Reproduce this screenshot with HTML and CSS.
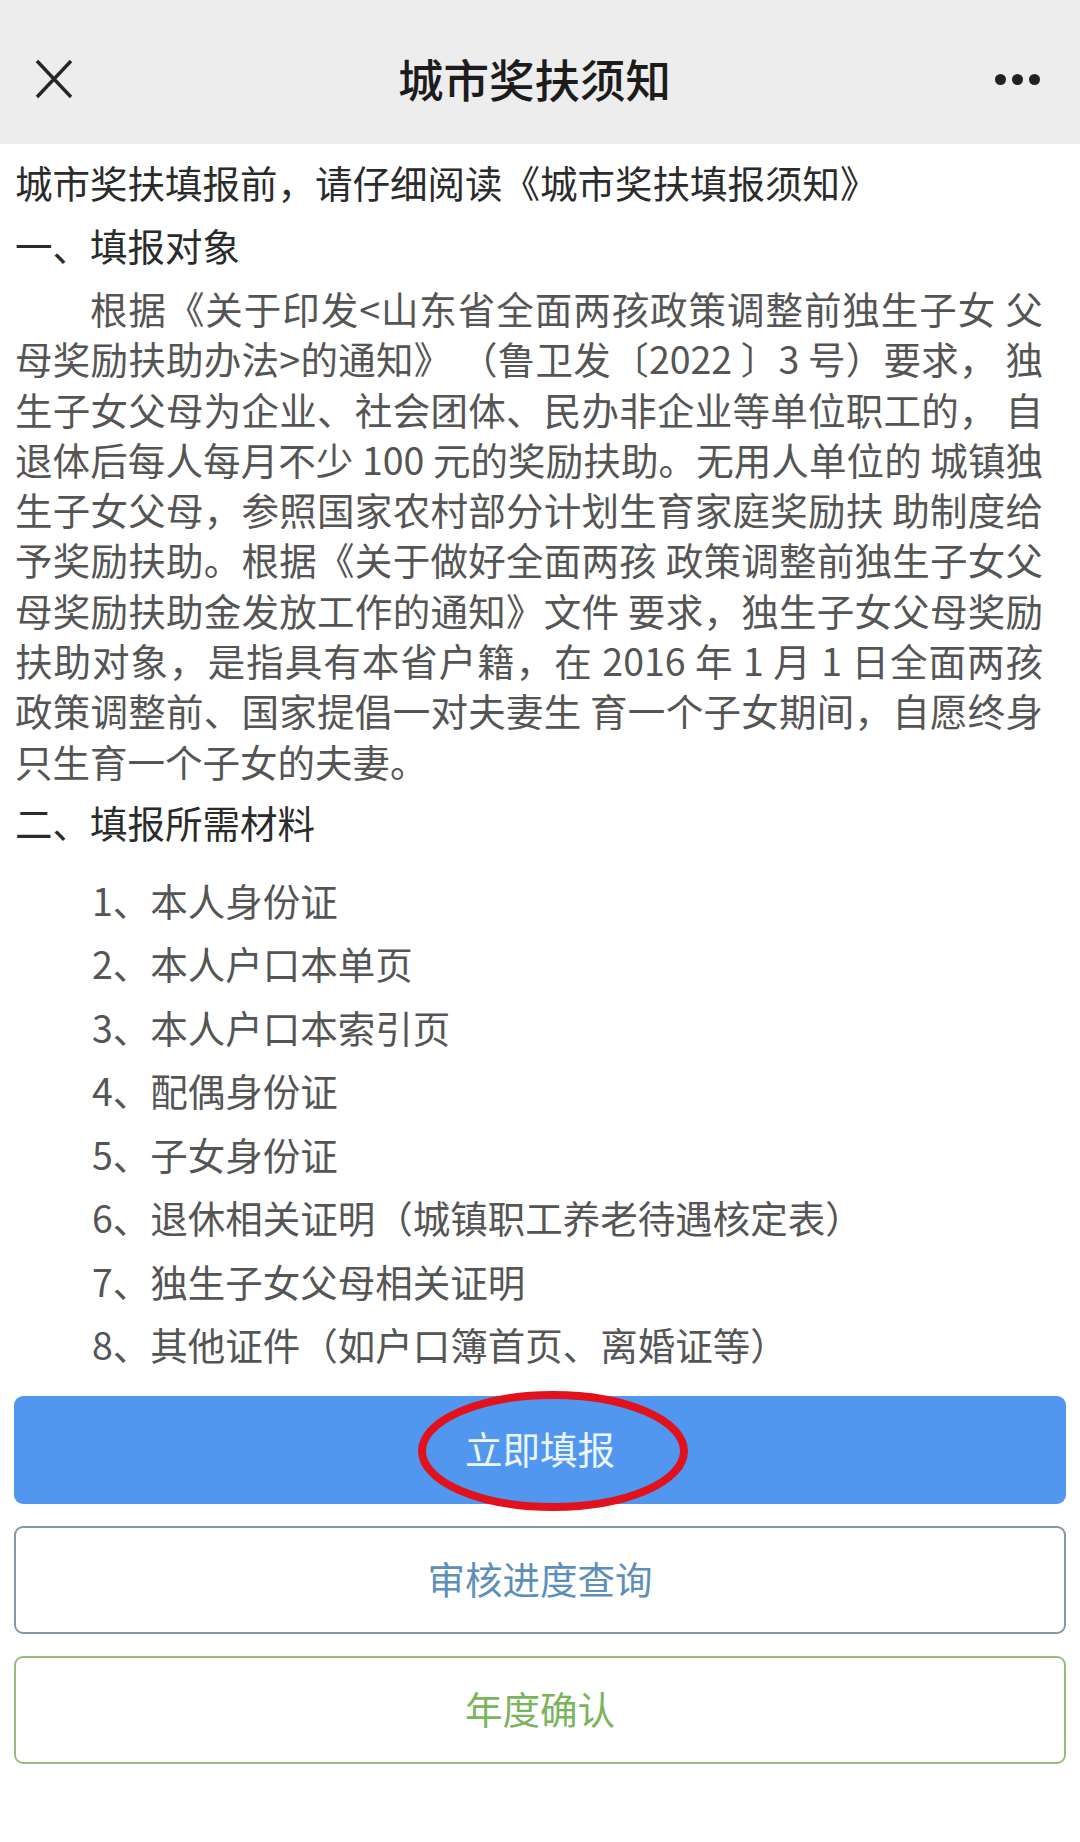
FILE: index.html
```html
<!DOCTYPE html>
<html lang="zh-CN">
<head>
<meta charset="utf-8">
<title>城市奖扶须知</title>
<link rel="stylesheet" href="styles.css">
</head>
<body>
<header class="topbar">
  <button class="icon-btn close" aria-label="关闭">
    <svg width="40" height="40" viewBox="0 0 40 40"><path d="M3 2 L37 38 M37 2 L3 38" stroke="#262626" stroke-width="3.4" fill="none" stroke-linecap="butt"/></svg>
  </button>
  <h1 class="title">城市奖扶须知</h1>
  <button class="icon-btn more" aria-label="更多">
    <span class="dot"></span><span class="dot"></span><span class="dot"></span>
  </button>
</header>
<main class="content">
  <p class="intro">城市奖扶填报前，请仔细阅读《城市奖扶填报须知》</p>
  <h2 class="section">一、填报对象</h2>
  <div class="para">
    <span class="ln first">根据《关于印发&lt;山东省全面两孩政策调整前独生子女 父</span>
    <span class="ln">母奖励扶助办法&gt;的通知》 （鲁卫发〔2022 〕3 号）要求， 独</span>
    <span class="ln">生子女父母为企业、社会团体、民办非企业等单位职工的， 自</span>
    <span class="ln">退体后每人每月不少 100 元的奖励扶助。无用人单位的 城镇独</span>
    <span class="ln">生子女父母，参照国家农村部分计划生育家庭奖励扶 助制度给</span>
    <span class="ln">予奖励扶助。根据《关于做好全面两孩 政策调整前独生子女父</span>
    <span class="ln">母奖励扶助金发放工作的通知》文件 要求，独生子女父母奖励</span>
    <span class="ln">扶助对象，是指具有本省户籍，在 2016 年 1 月 1 日全面两孩</span>
    <span class="ln">政策调整前、国家提倡一对夫妻生 育一个子女期间，自愿终身</span>
    <span class="ln last">只生育一个子女的夫妻。</span>
  </div>
  <h2 class="section">二、填报所需材料</h2>
  <ul class="materials">
    <li>1、本人身份证</li>
    <li>2、本人户口本单页</li>
    <li>3、本人户口本索引页</li>
    <li>4、配偶身份证</li>
    <li>5、子女身份证</li>
    <li>6、退休相关证明（城镇职工养老待遇核定表）</li>
    <li>7、独生子女父母相关证明</li>
    <li>8、其他证件（如户口簿首页、离婚证等）</li>
  </ul>
  <div class="actions">
    <button class="btn primary">立即填报
      <svg class="circle" width="280" height="130" viewBox="0 0 280 130"><ellipse cx="140" cy="65" rx="131" ry="56" fill="none" stroke="#e1121b" stroke-width="8"/></svg>
    </button>
    <button class="btn outline-blue">审核进度查询</button>
    <button class="btn outline-green">年度确认</button>
  </div>
</main>
</body>
</html>
```
FILE: styles.css
```css
* { box-sizing: border-box; }
html, body { margin: 0; padding: 0; background: #fff; }
body {
  width: 1080px;
  height: 1842px;
  overflow: hidden;
  font-family: "Noto Sans CJK SC", "Noto Sans", sans-serif;
  color: #555;
}
.topbar {
  height: 144px;
  background: #ededed;
  display: flex;
  align-items: center;
  justify-content: space-between;
  padding: 14px 40px 0 34px;
}
.icon-btn {
  border: 0;
  background: none;
  padding: 0;
  display: flex;
  align-items: center;
}
.close { width: 40px; height: 40px; }
.title {
  margin: 0;
  font-size: 45.5px;
  font-weight: 500;
  color: #1c1c1c;
  line-height: 1;
  letter-spacing: 0;
}
.more { gap: 6px; }
.dot {
  width: 11px;
  height: 11px;
  border-radius: 50%;
  background: #222;
}
.content {
  padding: 6px 0 0 15px;
}
.intro {
  margin: 0;
  font-size: 37.5px;
  line-height: 63px;
  color: #2b2b2b;
}
.section {
  margin: 0;
  font-size: 37.5px;
  font-weight: 400;
  line-height: 63px;
  color: #2b2b2b;
}
.para {
  margin: 7px 37px 4px 0;
  font-size: 37.5px;
  line-height: 50.3px;
  color: #555;
}
.ln {
  display: block;
  text-align: justify;
  text-align-last: justify;
}
.ln.first { padding-left: 75px; }
.ln.last { text-align-last: left; }
.materials {
  list-style: none;
  margin: 15px 0 0;
  padding: 0 0 0 77px;
  font-size: 37.5px;
  line-height: 63.5px;
  color: #555;
}
.actions {
  margin: 20px 0 0 -1px;
  width: 1052px;
  display: flex;
  flex-direction: column;
  gap: 22px;
}
.btn {
  position: relative;
  height: 108px;
  border-radius: 9px;
  font-family: "Noto Sans CJK SC", "Noto Sans", sans-serif;
  font-size: 37.5px;
  display: flex;
  align-items: center;
  justify-content: center;
  padding: 0 0 4px;
}
.primary {
  background: #5297ef;
  border: 0;
  color: #eef7ff;
}
.outline-blue {
  background: #fff;
  border: 2px solid #7f98ad;
  color: #5d8fba;
}
.outline-green {
  background: #fff;
  border: 2px solid #98bb7e;
  color: #7ab55c;
}
.circle {
  position: absolute;
  left: 399px;
  top: -10px;
  pointer-events: none;
}
```
